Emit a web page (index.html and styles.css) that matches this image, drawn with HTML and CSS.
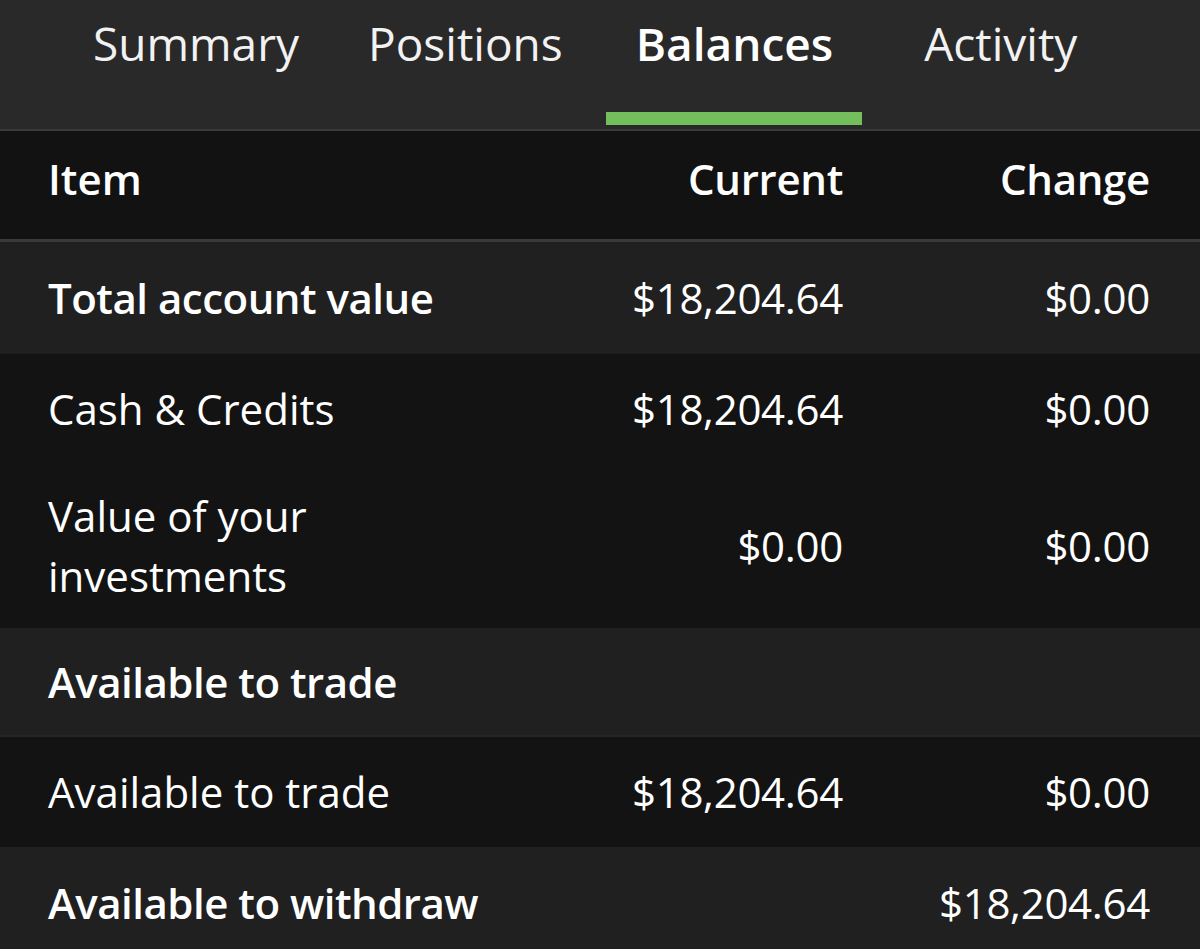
FILE: index.html
```html
<!DOCTYPE html>
<html lang="en">
<head>
<meta charset="utf-8">
<title>Balances</title>
<link rel="stylesheet" href="styles.css">
</head>
<body>
<nav class="tabs">
  <div class="tab tab-summary">Summary</div>
  <div class="tab tab-positions">Positions</div>
  <div class="tab tab-balances active">Balances</div>
  <div class="tab tab-activity">Activity</div>
</nav>
<section class="table">
  <div class="row head">
    <div class="cell label">Item</div>
    <div class="cell num">Current</div>
    <div class="cell num">Change</div>
  </div>
  <div class="row light bold-label">
    <div class="cell label">Total account value</div>
    <div class="cell num">$18,204.64</div>
    <div class="cell num">$0.00</div>
  </div>
  <div class="row dark sep">
    <div class="cell label">Cash &amp; Credits</div>
    <div class="cell num">$18,204.64</div>
    <div class="cell num">$0.00</div>
  </div>
  <div class="row dark tall">
    <div class="cell label wrap">Value of your investments</div>
    <div class="cell num">$0.00</div>
    <div class="cell num">$0.00</div>
  </div>
  <div class="row light bold-label section">
    <div class="cell label span">Available to trade</div>
  </div>
  <div class="row dark">
    <div class="cell label">Available to trade</div>
    <div class="cell num">$18,204.64</div>
    <div class="cell num">$0.00</div>
  </div>
  <div class="row light bold-label">
    <div class="cell label span">Available to withdraw</div>
    <div class="cell num">$18,204.64</div>
  </div>
</section>
</body>
</html>
```
FILE: styles.css
```css
html, body {
  margin: 0;
  padding: 0;
  background: #202020;
}
body {
  font-family: "Open Sans", "Noto Sans", sans-serif;
  color: #ffffff;
  width: 1200px;
  height: 949px;
  overflow: hidden;
}
.tabs {
  display: flex;
  align-items: flex-start;
  height: 129px;
  background: #292929;
  border-bottom: 2px solid #3a3a3a;
  box-sizing: content-box;
  padding-left: 63px;
}
.tab {
  font-size: 46px;
  font-weight: 400;
  line-height: 86px;
  padding: 0 30px;
  height: 125px;
  box-sizing: border-box;
  color: #f2f2f2;
  white-space: nowrap;
}
.tab-positions { margin-left: 9px; }
.tab-balances { margin-left: 13px; }
.tab-activity { margin-left: 32px; }
.tab.active {
  font-weight: 600;
  color: #ffffff;
  padding: 0 29px 0 30px;
  border-bottom: 13px solid #72bf5c;
}
.table {
  display: flex;
  flex-direction: column;
}
.row {
  display: grid;
  grid-template-columns: 400px 1fr 307px;
  align-items: center;
  padding: 0 50px 0 48px;
  font-size: 42px;
  line-height: 60px;
  box-sizing: border-box;
}
.head {
  background: #121212;
  height: 111px;
  padding-bottom: 12px;
  border-bottom: 3px solid #393939;
  font-weight: 600;
}
.light {
  background: #202020;
  height: 111px;
}
.dark {
  background: #131313;
  height: 110px;
}
.dark.tall {
  height: 165px;
}
.sep {
  border-top: 1px solid #1c1c1c;
}
.section {
  height: 109px;
  border-bottom: 2px solid #262626;
}
.bold-label .label {
  font-weight: 600;
  letter-spacing: -0.5px;
}
.num {
  text-align: right;
  white-space: nowrap;
  letter-spacing: -0.3px;
}
.label {
  white-space: nowrap;
}
.label.wrap {
  white-space: normal;
  max-width: 300px;
}
.label.span {
  grid-column: 1 / 3;
}
```
